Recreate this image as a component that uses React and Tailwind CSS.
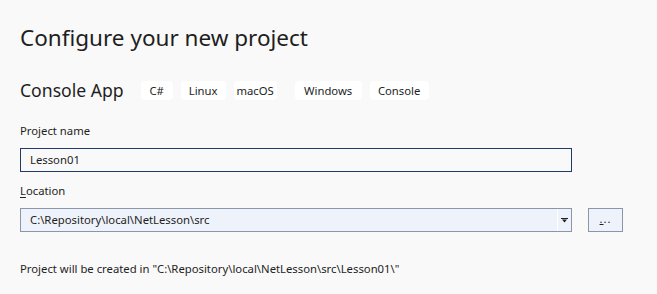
const TAGS = [
  { label: "C#", w: "w-[32px]", ml: "ml-0" },
  { label: "Linux", w: "w-[45px]", ml: "ml-[8px]" },
  { label: "macOS", w: "w-[43px]", ml: "ml-[8px]" },
  { label: "Windows", w: "w-[67px]", ml: "ml-[18px]" },
  { label: "Console", w: "w-[59px]", ml: "ml-[8px]" },
];

export default function App() {
  return (
    <div className="w-[657px] h-[294px] bg-[#f9f9f9] text-[#1e1e1e] font-['Noto_Sans','Open_Sans',sans-serif] px-[20px] pt-[23px] overflow-hidden">
      {/* Header */}
      <h1 className="text-[22.5px] leading-[30px]">Configure your new project</h1>

      <div className="flex items-center mt-[25px] h-[24px]">
        <span className="text-[17.6px] leading-[24px]">Console App</span>
        <div className="flex items-center ml-[17px]">
          {TAGS.map((t) => (
            <span
              key={t.label}
              className={`${t.w} ${t.ml} h-[19px] bg-white rounded-[4px] text-[11.3px] leading-[19px] text-center`}
            >
              {t.label}
            </span>
          ))}
        </div>
      </div>

      {/* Project name */}
      <div className="mt-[21px] text-[11.3px] leading-[16px]">Project name</div>
      <div className="mt-[9px] w-[552px] h-[24px] border border-[#22396b] bg-[#f9f9f9] pl-[9px] text-[11.3px] leading-[22px]">
        Lesson01
      </div>

      {/* Location */}
      <div className="mt-[11px] text-[11.3px] leading-[16px]">
        <span className="underline underline-offset-2">L</span>ocation
      </div>
      <div className="mt-[9px] flex items-center">
        <div className="w-[552px] h-[24px] border border-[#8a97aa] bg-[#eef2fa] flex">
          <div className="flex-1 pl-[9px] text-[11.3px] leading-[22px]">
            C:\Repository\local\NetLesson\src
          </div>
          <div className="w-[14px] border-l border-white flex items-center justify-center">
            <svg width="7" height="5" viewBox="0 0 7 5">
              <rect x="0" y="0" width="7" height="1" fill="#1e1e1e" />
              <path d="M1 1.5 L6 1.5 L3.5 4.5 Z" fill="#1e1e1e" />
            </svg>
          </div>
        </div>
        <button className="ml-[16px] w-[35px] h-[24px] border border-[#8a97aa] bg-[#eef2fa] text-[11px] leading-[20px] flex items-end justify-center pb-[2px]">
          <span className="tracking-[1px]">
            <span className="underline">.</span>..
          </span>
        </button>
      </div>

      {/* Footer */}
      <div className="mt-[29px] text-[11.3px] leading-[16px]">
        Project will be created in "C:\Repository\local\NetLesson\src\Lesson01\"
      </div>
    </div>
  );
}
